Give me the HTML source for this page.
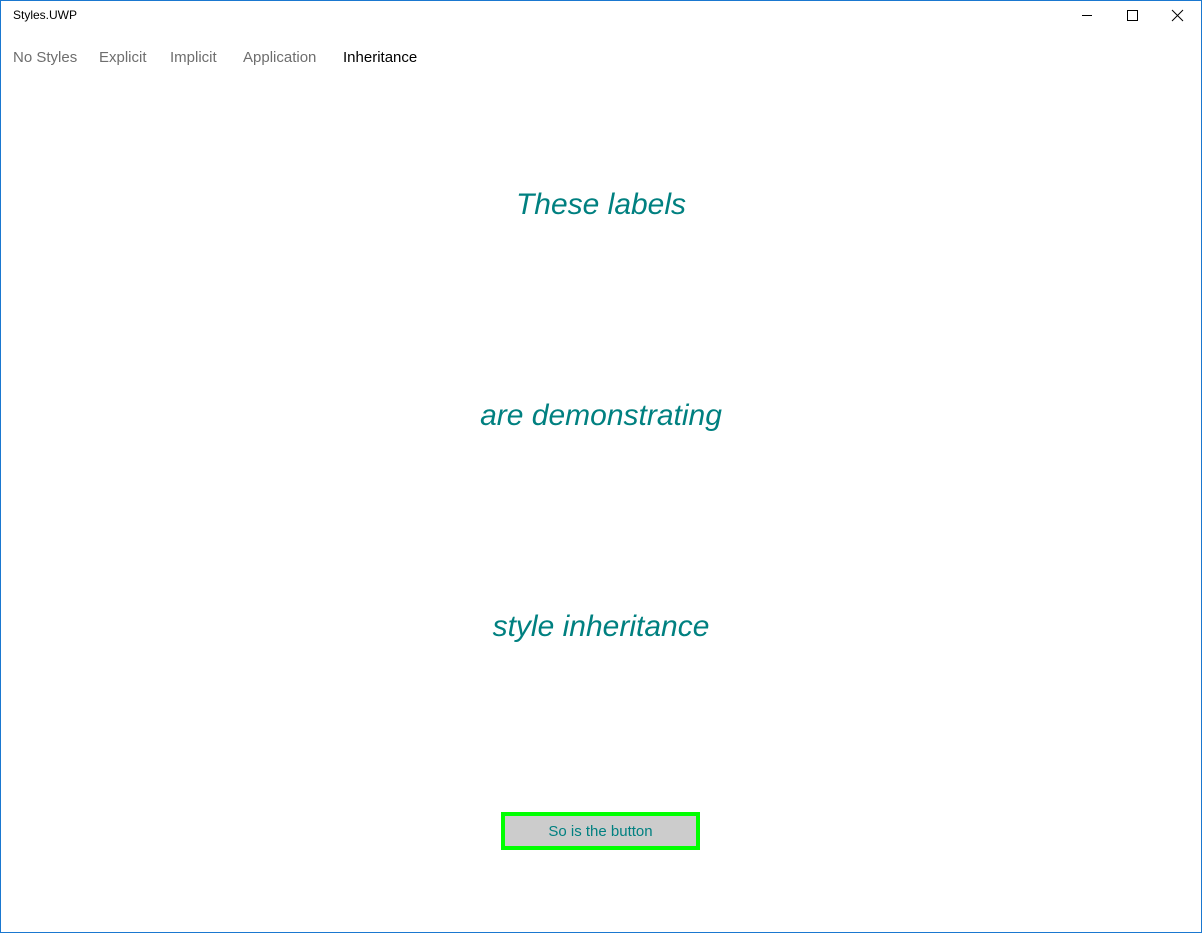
<!DOCTYPE html>
<html><head><style>
body{margin:0;width:1202px;height:933px;overflow:hidden;background:#fff;font-family:"Liberation Sans",sans-serif;position:relative}
.frame{position:absolute;left:0;top:0;width:1200px;height:931px;border:1px solid #1a78d0}
.t{position:absolute;white-space:nowrap}
.tab{position:absolute;top:49px;font-size:15px;color:#6e6e6e}
.big{position:absolute;left:0;width:1202px;text-align:center;font-style:italic;color:#008080;font-size:30px}
</style></head><body>
<div class="frame"></div>
<div class="t" style="left:13px;top:8px;font-size:12px;color:#000">Styles.UWP</div>
<svg style="position:absolute;left:1070px;top:0" width="132" height="32">
<line x1="12" y1="15.5" x2="22" y2="15.5" stroke="#000"/>
<rect x="57.5" y="10.5" width="10" height="10" fill="none" stroke="#000"/>
<path d="M102 10 L113 21 M113 10 L102 21" stroke="#000"/>
</svg>
<div class="tab" style="left:13px">No Styles</div>
<div class="tab" style="left:99px">Explicit</div>
<div class="tab" style="left:170px">Implicit</div>
<div class="tab" style="left:243px">Application</div>
<div class="tab" style="left:343px;color:#000">Inheritance</div>
<div class="big" style="top:188px">These labels</div>
<div class="big" style="top:399px">are demonstrating</div>
<div class="big" style="top:610px">style inheritance</div>
<div style="position:absolute;left:501px;top:812px;width:191px;height:30px;border:4px solid #00ff00;background:#cccccc;color:#008080;font-size:15px;text-align:center;line-height:32px">So is the button</div>
</body></html>
